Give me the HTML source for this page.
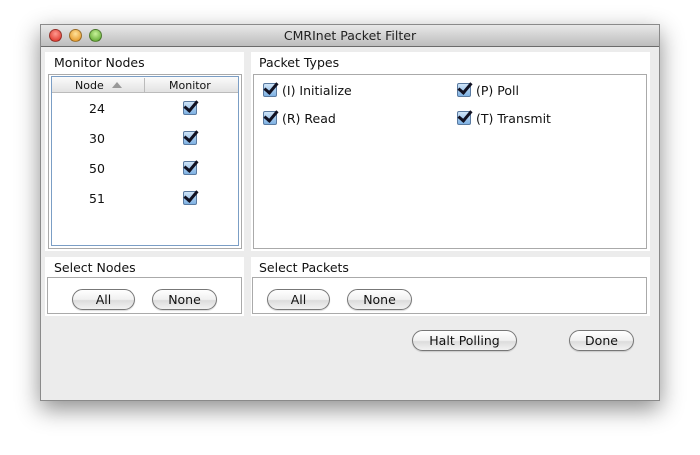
<!DOCTYPE html>
<html><head><style>
*{margin:0;padding:0;box-sizing:border-box}
body{width:700px;height:455px;background:#fff;position:relative;overflow:hidden;font-family:"DejaVu Sans","Liberation Sans",sans-serif;font-size:12.5px;color:#111}
.a{position:absolute}
#win{left:40px;top:24px;width:620px;height:377px;background:#ececec;border:1px solid #8a8a8a;box-shadow:0 8px 22px rgba(0,0,0,.45)}
#tb{left:0;top:0;width:618px;height:22px;background:linear-gradient(#e8e8e8,#bdbdbd);border-bottom:1px solid #6b6b6b;text-align:center;line-height:22px;font-size:12.5px;color:#222}
.l{width:13px;height:13px;border-radius:50%;top:4px;border:1px solid rgba(0,0,0,.35)}
.p{background:#fff}
.bx{border:1px solid #aaa;background:#fff}
.t{font-size:12.5px;color:#111}
.btn{height:21px;border:1px solid #777;border-radius:11px;background:linear-gradient(#fff,#f0f0f0 50%,#dcdcdc 55%,#f2f2f2);text-align:center;line-height:19px;font-size:12.5px;box-shadow:0 1px 1px rgba(0,0,0,.15)}
.cb{width:14px;height:14px;border:1px solid #5a7aa0;border-radius:2px;background:linear-gradient(#cfe4f8,#7fb2e3)}
.cb:after{content:"";position:absolute;left:3px;top:-4px;width:5px;height:11px;border:solid #112;border-width:0 3px 3px 0;transform:rotate(40deg)}
</style></head><body>
<div id="win" class="a">
<div id="tb" class="a">CMRInet Packet Filter</div>
<div class="a l" style="left:8px;background:radial-gradient(circle at 50% 35%,#ff9a90,#d9251a)"></div>
<div class="a l" style="left:28px;background:radial-gradient(circle at 50% 35%,#ffe29a,#e08a12)"></div>
<div class="a l" style="left:48px;background:radial-gradient(circle at 50% 35%,#c8f29a,#4f9d20)"></div>
</div>
<div class="a p" style="left:45px;top:52px;width:199px;height:199px"></div>
<div class="a t" style="left:54px;top:55px">Monitor Nodes</div>
<div class="a bx" style="left:48px;top:74px;width:194px;height:175px"></div>
<div class="a" style="left:51px;top:76px;width:188px;height:170px;border:1px solid #7b9ec5;background:#fff"></div>
<div class="a" style="left:52px;top:77px;width:186px;height:16px;background:linear-gradient(#fbfbfb,#e2e2e2);border-bottom:1px solid #bbb"></div>
<div class="a" style="left:75px;top:79px;font-size:11px">Node</div>
<div class="a" style="left:112px;top:82px;width:0;height:0;border-left:5px solid transparent;border-right:5px solid transparent;border-bottom:6px solid #999"></div>
<div class="a" style="left:144px;top:78px;width:1px;height:14px;background:#bbb"></div>
<div class="a" style="left:169px;top:79px;font-size:11px">Monitor</div>
<div class="a t" style="left:89px;top:101px">24</div>
<div class="a t" style="left:89px;top:131px">30</div>
<div class="a t" style="left:89px;top:161px">50</div>
<div class="a t" style="left:89px;top:191px">51</div>
<div class="a cb" style="left:183px;top:101px"></div>
<div class="a cb" style="left:183px;top:131px"></div>
<div class="a cb" style="left:183px;top:161px"></div>
<div class="a cb" style="left:183px;top:191px"></div>
<div class="a p" style="left:251px;top:52px;width:399px;height:199px"></div>
<div class="a t" style="left:259px;top:55px">Packet Types</div>
<div class="a bx" style="left:253px;top:74px;width:394px;height:175px"></div>
<div class="a cb" style="left:263px;top:83px"></div><div class="a t" style="left:282px;top:83px">(I) Initialize</div>
<div class="a cb" style="left:263px;top:111px"></div><div class="a t" style="left:282px;top:111px">(R) Read</div>
<div class="a cb" style="left:457px;top:83px"></div><div class="a t" style="left:476px;top:83px">(P) Poll</div>
<div class="a cb" style="left:457px;top:111px"></div><div class="a t" style="left:476px;top:111px">(T) Transmit</div>
<div class="a p" style="left:45px;top:257px;width:199px;height:59px"></div>
<div class="a t" style="left:54px;top:260px">Select Nodes</div>
<div class="a bx" style="left:47px;top:277px;width:195px;height:37px"></div>
<div class="a btn" style="left:72px;top:289px;width:63px">All</div>
<div class="a btn" style="left:152px;top:289px;width:65px">None</div>
<div class="a p" style="left:251px;top:257px;width:399px;height:59px"></div>
<div class="a t" style="left:259px;top:260px">Select Packets</div>
<div class="a bx" style="left:252px;top:277px;width:395px;height:37px"></div>
<div class="a btn" style="left:267px;top:289px;width:63px">All</div>
<div class="a btn" style="left:347px;top:289px;width:65px">None</div>
<div class="a btn" style="left:412px;top:330px;width:105px">Halt Polling</div>
<div class="a btn" style="left:569px;top:330px;width:65px">Done</div>
</body></html>
